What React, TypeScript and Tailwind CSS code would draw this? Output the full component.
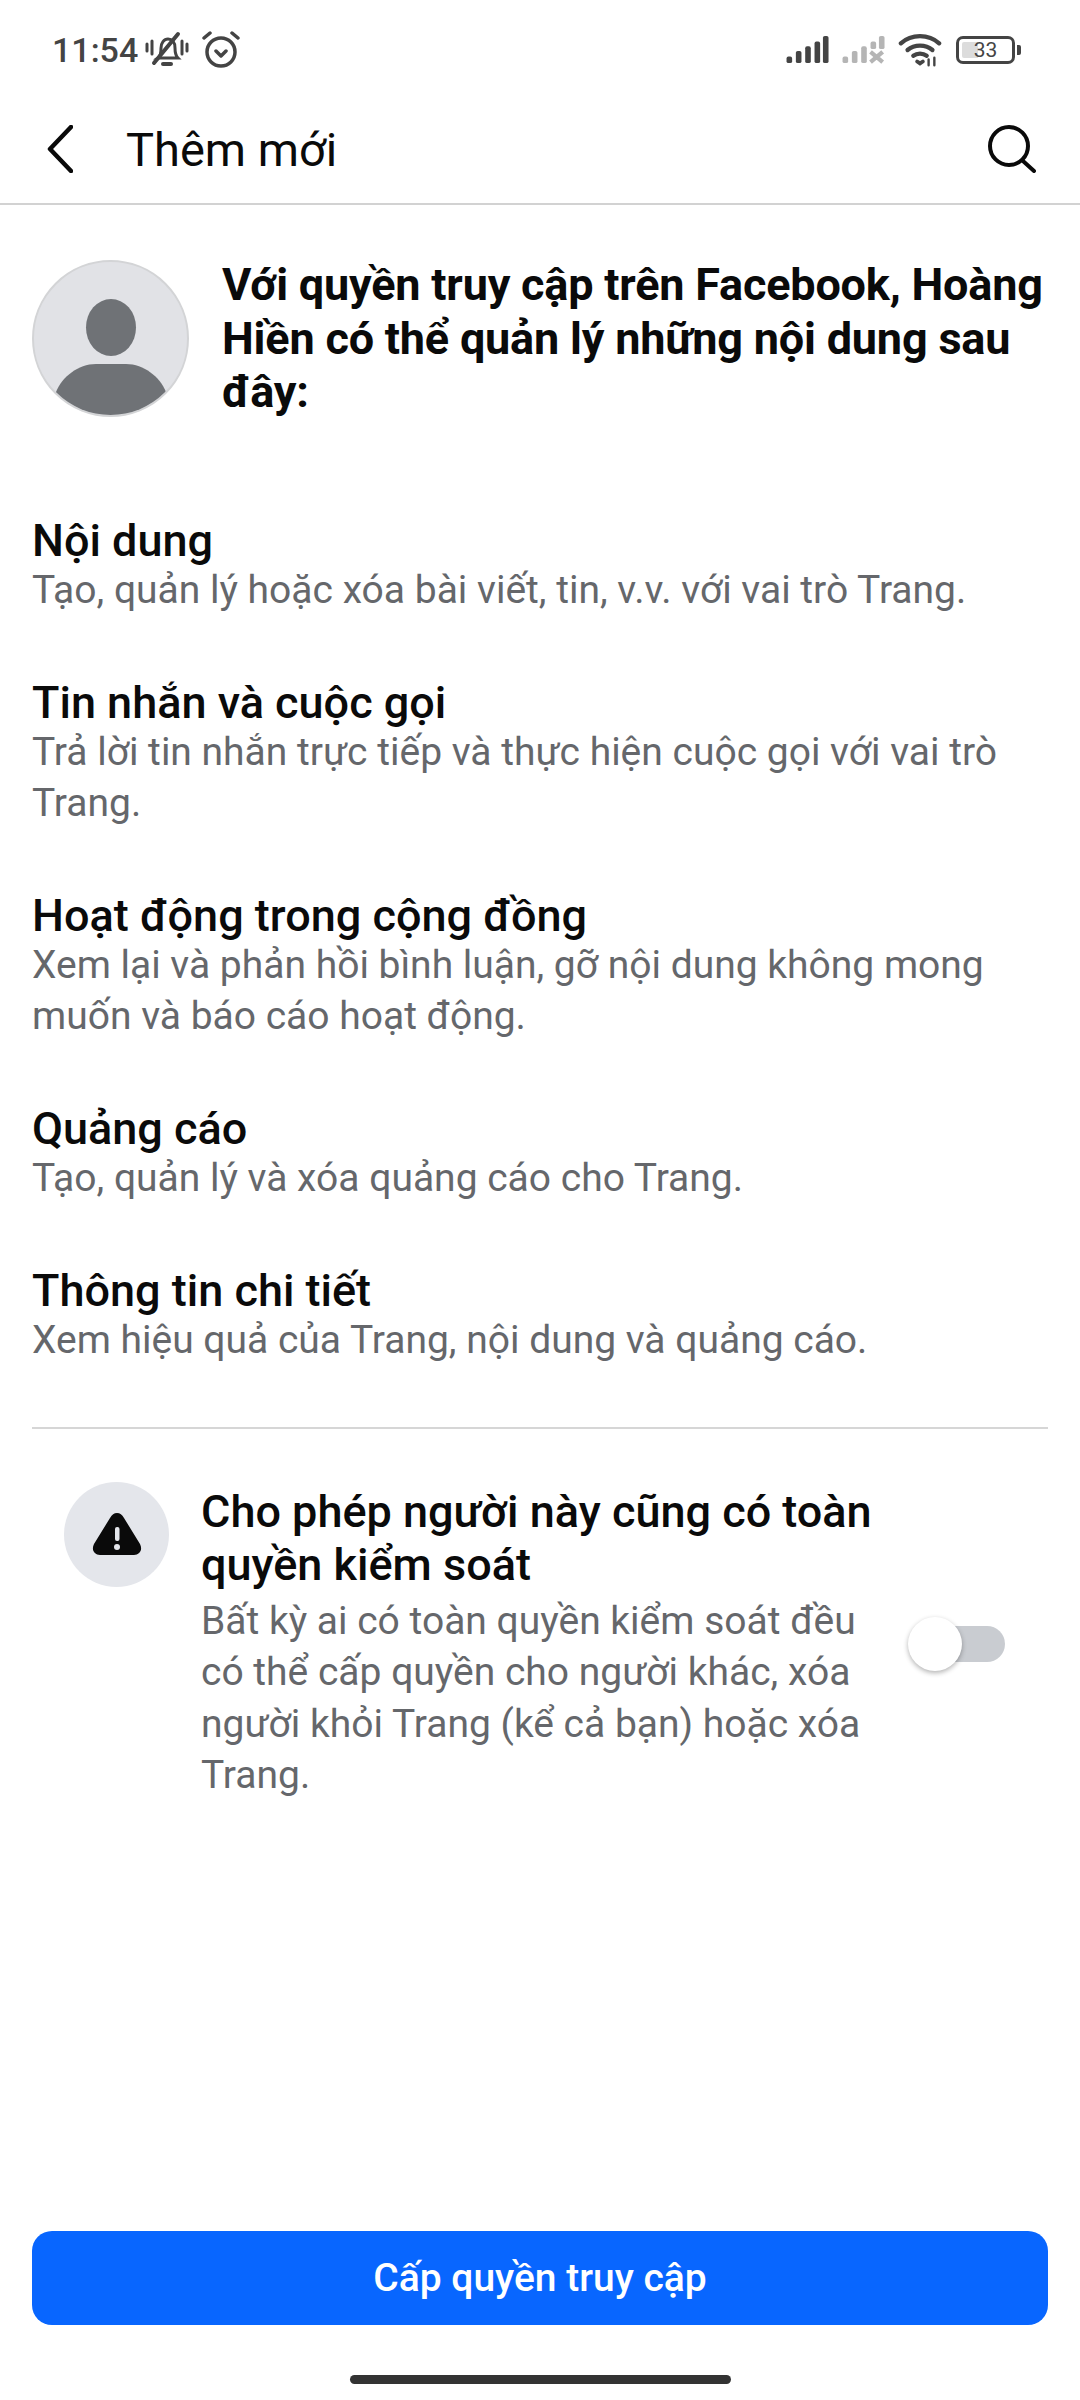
const sections = [
  { title: 'Nội dung', body: 'Tạo, quản lý hoặc xóa bài viết, tin, v.v. với vai trò Trang.' },
  { title: 'Tin nhắn và cuộc gọi', body: 'Trả lời tin nhắn trực tiếp và thực hiện cuộc gọi với vai trò Trang.' },
  { title: 'Hoạt động trong cộng đồng', body: 'Xem lại và phản hồi bình luận, gỡ nội dung không mong muốn và báo cáo hoạt động.' },
  { title: 'Quảng cáo', body: 'Tạo, quản lý và xóa quảng cáo cho Trang.' },
  { title: 'Thông tin chi tiết', body: 'Xem hiệu quả của Trang, nội dung và quảng cáo.' },
];

function StatusBar() {
  return (
    <div className="flex h-[100px] items-center justify-between pl-[52px] pr-[59px] text-[#444]">
      <div className="flex items-center">
        <span className="text-[34px] font-medium leading-none">11:54</span>
        <svg width="44" height="38" viewBox="0 0 44 38" className="ml-[7px]" fill="none" stroke="#444" strokeWidth="3" strokeLinecap="round">
          <path d="M2 13v7M7 10v13M37 10v13M42 13v7" />
          <path d="M13 27c3-2 3-5 3-10s3-9 7-9 7 3 7 9c0 5 1 8 3 10z" />
          <path d="M18 33h8" strokeWidth="4" />
          <path d="M9 32 33 3" stroke="#444" strokeWidth="4" />
        </svg>
        <svg width="38" height="38" viewBox="0 0 38 38" className="ml-[13px]" fill="none" stroke="#444" strokeWidth="3.500" strokeLinecap="round" strokeLinejoin="round">
          <circle cx="19" cy="21" r="14" />
          <path d="m14 20 5 5 5-5M2 7l6-5M36 7l-6-5" />
        </svg>
      </div>
      <div className="flex items-center">
        <svg width="44" height="28" viewBox="0 0 46 30" fill="#444">
          <rect x="0" y="22" width="6" height="7" rx="2" />
          <rect x="10" y="16" width="6" height="13" rx="2" />
          <rect x="20" y="11" width="6" height="18" rx="2" />
          <rect x="30" y="6" width="6" height="23" rx="2" />
          <rect x="39" y="0" width="6" height="29" rx="2" />
        </svg>
        <svg width="44" height="28" viewBox="0 0 46 30" fill="#b5b5b5" className="ml-[12px]">
          <rect x="0" y="22" width="6" height="7" rx="2" />
          <rect x="10" y="16" width="6" height="13" rx="2" />
          <rect x="20" y="11" width="6" height="18" rx="2" />
          <rect x="30" y="6" width="6" height="8" rx="2" />
          <rect x="39" y="0" width="6" height="14" rx="2" />
          <path d="m30 17 13 11M43 17 30 28" stroke="#b5b5b5" strokeWidth="4.500" />
        </svg>
        <svg width="44" height="34" viewBox="0 0 46 34" fill="none" stroke="#444" strokeWidth="4.500" strokeLinecap="round" className="ml-[12px]">
          <path d="M3 10c11-10 29-10 40 0" />
          <path d="M10 17c7-6 19-6 26 0" />
          <path d="M16 23c4-3 10-3 14 0" />
          <path d="m20 29 3 2 3-2" strokeWidth="4" />
          <path d="M32 33v-6M38 33v-8" strokeWidth="2.500" />
        </svg>
        <div className="relative ml-[14px] flex h-[28px] w-[59px] items-center justify-center rounded-[7px] border-[3px] border-[#444] text-[21px] leading-none">
          <div className="absolute left-[3px] top-[3px] h-[16px] w-[16px] rounded-l-[2px] bg-[#dcdcdc]" />
          <span className="relative">33</span>
        </div>
        <div className="ml-[2px] h-[10px] w-[4px] rounded-r-[2px] bg-[#444]" />
      </div>
    </div>
  );
}

function Avatar() {
  return (
    <div className="h-[157px] w-[157px] shrink-0 overflow-hidden rounded-full border-2 border-[#d3d4d6] bg-[#e1e2e6]">
      <svg width="153" height="153" viewBox="0 0 153 153" fill="#6f7276">
        <ellipse cx="77" cy="65.500" rx="25" ry="28.500" />
        <path d="M22 153v-23c6-15 22-28 40-28h30c18 0 34 13 40 28v23z" />
      </svg>
    </div>
  );
}

export default function App() {
  return (
    <div className="flex h-[2400px] w-[1080px] flex-col overflow-hidden bg-white font-['Roboto',sans-serif]">
      <StatusBar />

      <header className="flex h-[105px] items-center justify-between border-b-2 border-[#d2d2d2] pl-[47px] pr-[44px]">
        <div className="-mt-[6px] flex items-center">
          <svg width="26" height="48" viewBox="0 0 26 48" fill="none" stroke="#0a0a0a" strokeWidth="4.500" strokeLinecap="round" strokeLinejoin="round">
            <path d="M24 2 3 24l21 22" />
          </svg>
          <span className="ml-[53px] mt-[2px] text-[47px] leading-none text-[#0a0a0a]">Thêm mới</span>
        </div>
        <svg width="48" height="48" viewBox="0 0 48 48" fill="none" stroke="#0a0a0a" strokeWidth="4" strokeLinecap="round" className="-mt-[6px]">
          <circle cx="21" cy="21" r="19" />
          <path d="m35 36 11 10" />
        </svg>
      </header>

      <main className="flex flex-1 flex-col px-[32px]">
        <div className="mt-[55px] flex">
          <Avatar />
          <h1 className="-mt-[2px] ml-[33px] text-[45px] font-bold leading-[53.500px] tracking-[-0.2px] text-[#0a0a0a]">
            Với quyền truy cập trên Facebook, Hoàng Hiền có thể quản lý những nội dung sau đây:
          </h1>
        </div>

        <div className="mt-[94px] flex flex-col gap-[59px]">
          {sections.map((s) => (
            <section key={s.title}>
              <h2 className="pt-[3px] text-[45px] font-medium leading-[49px] text-[#0a0a0a]">{s.title}</h2>
              <p className="text-[39px] leading-[51px] text-[#65676b]">{s.body}</p>
            </section>
          ))}
        </div>

        <div className="mt-[61px] h-[2px] bg-[#d6d6d6]" />

        <div className="mt-[53px] flex items-start pl-[32px] pr-[43px]">
          <div className="flex h-[105px] w-[105px] shrink-0 items-center justify-center rounded-full bg-[#e4e6eb]">
            <svg width="52" height="46" viewBox="0 0 52 46">
              <path d="M26 2c3 0 5 1.500 7 5l16 26c3 6-.5 11-6 11H9c-5.500 0-9-5-6-11L19 7c2-3.500 4-5 7-5z" fill="#0a0a0a" />
              <rect x="24" y="16" width="4.500" height="14" rx="2" fill="#e4e6eb" />
              <circle cx="26" cy="36" r="3" fill="#e4e6eb" />
            </svg>
          </div>
          <div className="ml-[32px] mt-[3px] w-[690px]">
            <h2 className="text-[45px] font-medium leading-[53px] text-[#0a0a0a]">
              Cho phép người này cũng có toàn quyền kiểm soát
            </h2>
            <p className="mt-[5px] text-[39px] leading-[51.500px] text-[#65676b]">
              Bất kỳ ai có toàn quyền kiểm soát đều có thể cấp quyền cho người khác, xóa người khỏi Trang (kể cả bạn) hoặc xóa Trang.
            </p>
          </div>
          <div className="relative ml-auto mt-[144px] h-[36px] w-[80px] shrink-0 rounded-full bg-[#c9ccd1]">
            <div className="absolute -left-[17px] -top-[9px] h-[54px] w-[54px] rounded-full bg-white shadow-[0_2px_5px_rgba(0,0,0,0.3)]" />
          </div>
        </div>

        <button className="mt-auto flex h-[94px] items-center justify-center rounded-[20px] bg-[#0866ff] text-[39px] font-medium text-white">
          Cấp quyền truy cập
        </button>
      </main>

      <div className="flex h-[75px] justify-center pt-[50px]">
        <div className="h-[9px] w-[381px] rounded-full bg-[#333]" />
      </div>
    </div>
  );
}
